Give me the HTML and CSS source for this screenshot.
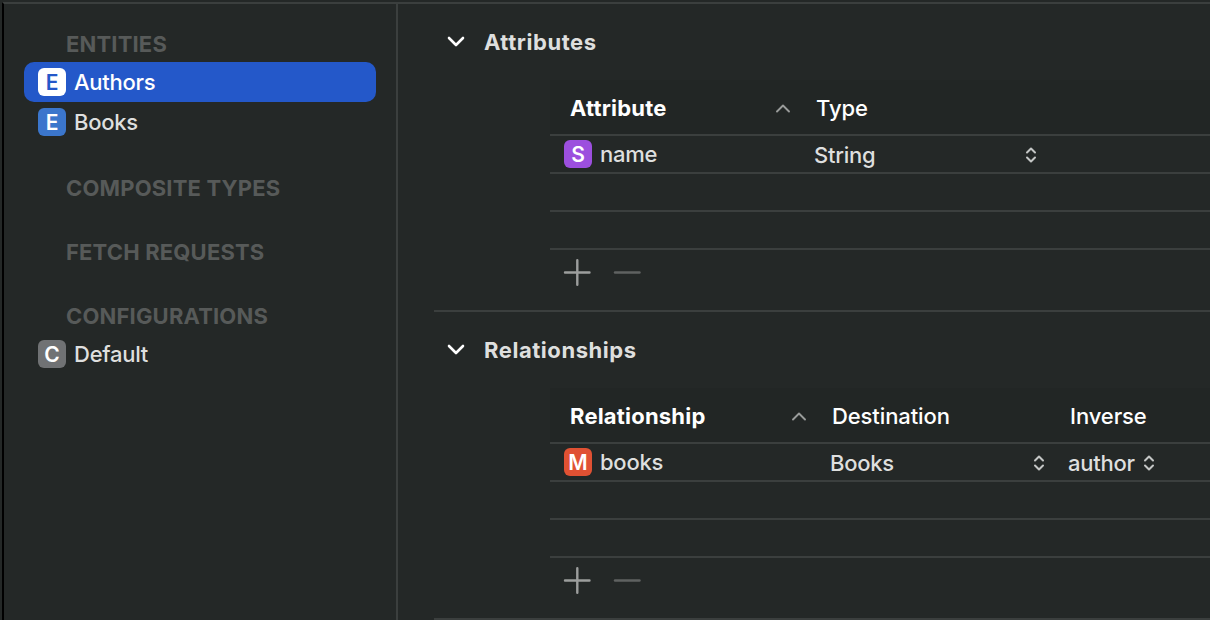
FILE: index.html
```html
<!DOCTYPE html>
<html lang="en">

<head>
  <meta charset="UTF-8">
  <meta name="viewport" content="width=device-width, initial-scale=1.0">
  <title>Data Model Editor</title>
  <link rel="stylesheet" href="styles.css">
</head>

<body>
  <div class="editor">
    <aside class="sidebar">
      <section class="group">
        <h3 class="group-title">ENTITIES</h3>
        <a class="item item-selected"><span class="badge badge-white">E</span>Authors</a>
        <a class="item"><span class="badge badge-blue">E</span>Books</a>
      </section>
      <section class="group">
        <h3 class="group-title">COMPOSITE TYPES</h3>
      </section>
      <section class="group">
        <h3 class="group-title">FETCH REQUESTS</h3>
      </section>
      <section class="group">
        <h3 class="group-title">CONFIGURATIONS</h3>
        <a class="item"><span class="badge badge-gray">C</span>Default</a>
      </section>
    </aside>

    <main class="detail">
      <section class="panel attributes">
        <header class="panel-header">
          <svg class="disclosure" viewBox="0 0 18 12"><path d="M2 2l7 7 7-7" /></svg>
          <h2 class="panel-title">Attributes</h2>
        </header>
        <div class="table">
          <div class="row row-head">
            <div class="cell cell-sorted">
              <strong>Attribute</strong>
              <svg class="sort" viewBox="0 0 14 9"><path d="M1 7.5l6-6 6 6" /></svg>
            </div>
            <div class="cell">Type</div>
          </div>
          <div class="row">
            <div class="cell"><span class="badge badge-purple">S</span>name</div>
            <div class="cell cell-popup">
              String
              <svg class="stepper" viewBox="0 0 12 16"><path d="M2 5.5l4-4 4 4M2 10.5l4 4 4-4" /></svg>
            </div>
          </div>
          <div class="row"></div>
          <div class="row"></div>
        </div>
        <footer class="actions">
          <svg class="action" viewBox="0 0 28 28"><path d="M2 13.5h24.5M14.3 1.2v24.5" /></svg>
          <svg class="action action-disabled" viewBox="0 0 28 28"><path d="M2 13.5h24.5" /></svg>
        </footer>
      </section>

      <section class="panel relationships">
        <header class="panel-header">
          <svg class="disclosure" viewBox="0 0 18 12"><path d="M2 2l7 7 7-7" /></svg>
          <h2 class="panel-title">Relationships</h2>
        </header>
        <div class="table">
          <div class="row row-head">
            <div class="cell cell-sorted">
              <strong>Relationship</strong>
              <svg class="sort" viewBox="0 0 14 9"><path d="M1 7.5l6-6 6 6" /></svg>
            </div>
            <div class="cell">Destination</div>
            <div class="cell">Inverse</div>
          </div>
          <div class="row">
            <div class="cell"><span class="badge badge-red">M</span>books</div>
            <div class="cell cell-popup">
              Books
              <svg class="stepper" viewBox="0 0 12 16"><path d="M2 5.5l4-4 4 4M2 10.5l4 4 4-4" /></svg>
            </div>
            <div class="cell cell-popup cell-fit">
              author
              <svg class="stepper" viewBox="0 0 12 16"><path d="M2 5.5l4-4 4 4M2 10.5l4 4 4-4" /></svg>
            </div>
          </div>
          <div class="row"></div>
          <div class="row"></div>
        </div>
        <footer class="actions">
          <svg class="action" viewBox="0 0 28 28"><path d="M2 13.5h24.5M14.3 1.2v24.5" /></svg>
          <svg class="action action-disabled" viewBox="0 0 28 28"><path d="M2 13.5h24.5" /></svg>
        </footer>
      </section>
    </main>
  </div>
</body>

</html>
```
FILE: styles.css
```css
html {
  box-sizing: border-box;
  font-family: Inter, "Liberation Sans", sans-serif;
  font-size: 22px;
}

*,
*:after,
*:before {
  box-sizing: inherit;
}

body {
  margin: 0;
  padding: 2px 0 0 2px;
  height: 620px;
  overflow: hidden;
  font-weight: 450;
  letter-spacing: -.25px;
  color: #dedfde;
  background-color: #242827;
}

h2,
h3 {
  margin: 0;
  font-size: 1rem;
}

svg {
  display: block;
  flex: none;
  fill: none;
  stroke: currentColor;
  stroke-linecap: round;
  stroke-linejoin: round;
}

.editor {
  display: flex;
  height: 618px;
  border-top: 2px solid #3b3f3e;
  border-left: 2px solid #000;
}

/* Sidebar */
.sidebar {
  flex: none;
  width: 394px;
  padding: 20px 20px 0;
  border-right: 2px solid #3b3f3e;
}

.group {
  margin-bottom: 26px;
}

.group-title {
  padding-left: 42px;
  height: 38px;
  line-height: 40px;
  font-weight: 700;
  letter-spacing: .17px;
  color: #575a59;
}

.item {
  display: flex;
  align-items: center;
  gap: 8px;
  height: 40px;
  padding-left: 14px;
  border-radius: 10px;
}

.item-selected {
  color: #fff;
  background-color: #2458c9;
}

.badge {
  flex: none;
  width: 28px;
  height: 28px;
  border-radius: 6px;
  line-height: 29px;
  text-align: center;
  font-size: 21px;
  font-weight: 600;
  letter-spacing: 0;
  color: #fff;
}

.badge-white {
  color: #2458c9;
  background-color: #fff;
}

.badge-blue {
  background-color: #3b76cc;
}

.badge-gray {
  background-color: #707274;
}

.badge-purple {
  background-color: #9c4fde;
}

.badge-red {
  background-color: #e05133;
}

/* Detail */
.detail {
  flex: 1;
  padding-left: 36px;
}

.panel {
  height: 308px;
  border-bottom: 2px solid #3b3f3e;
}

.panel-header {
  display: flex;
  align-items: center;
  gap: 19px;
  height: 76px;
  padding-left: 13px;
}

.disclosure {
  width: 18px;
  height: 12px;
  color: #fff;
  stroke-width: 2.6;
}

.panel-title {
  font-weight: 750;
  letter-spacing: .55px;
}

.table {
  margin-left: 116px;
}

.row {
  display: grid;
  height: 38px;
  border-bottom: 2px solid #3b3f3e;
}

.attributes .row {
  grid-template-columns: 246px 241px;
}

.relationships .row {
  grid-template-columns: 262px 238px 1fr;
}

.row-head {
  height: 56px;
  padding-top: 2px;
  font-weight: 500;
  letter-spacing: -.1px;
  color: #fff;
  background-color: #222625;
}

.cell {
  display: flex;
  align-items: center;
  gap: 8px;
  padding-left: 14px;
}

.row-head .cell {
  padding-left: 20px;
}

.cell-sorted {
  justify-content: space-between;
}

.row .cell-popup {
  justify-content: space-between;
  padding: 2px 0 0 18px;
}

.relationships .cell-popup {
  padding-right: 5px;
}

.relationships .cell-fit {
  justify-content: flex-start;
}

strong {
  font-weight: 700;
  letter-spacing: .2px;
}

.sort {
  width: 14px;
  height: 9px;
  margin-right: 6px;
  color: #999b9a;
  stroke-width: 1.9;
}

.stepper {
  width: 12px;
  height: 16px;
  stroke-width: 2;
  color: #c4c6c5;
}

.actions {
  display: flex;
  gap: 22px;
  padding: 9px 0 0 129px;
}

.action {
  width: 28px;
  height: 28px;
  color: #9c9e9d;
  stroke-width: 2.4;
}

.action-disabled {
  color: #5f6261;
}
```
